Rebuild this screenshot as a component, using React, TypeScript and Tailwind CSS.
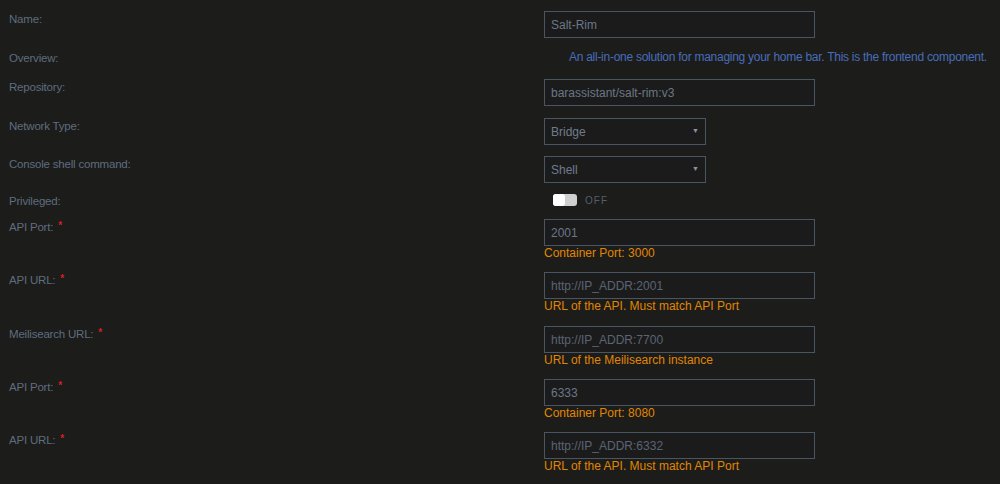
import type { ReactNode } from 'react'

const FONT = { fontFamily: '"Liberation Sans", Arial, sans-serif' }

type Row =
  | { kind: 'input'; label: string; value: string; hint?: string; req?: boolean; placeholder?: boolean; mt: string }
  | { kind: 'select'; label: string; value: string; mt: string }
  | { kind: 'text'; label: string; value: string; mt: string }
  | { kind: 'switch'; label: string; mt: string }

const ROWS: Row[] = [
  { kind: 'input', label: 'Name:', value: 'Salt-Rim', mt: 'mt-[11px]' },
  { kind: 'text', label: 'Overview:', value: 'An all-in-one solution for managing your home bar. This is the frontend component.', mt: 'mt-[12px]' },
  { kind: 'input', label: 'Repository:', value: 'barassistant/salt-rim:v3', mt: 'mt-[15px]' },
  { kind: 'select', label: 'Network Type:', value: 'Bridge', mt: 'mt-[12px]' },
  { kind: 'select', label: 'Console shell command:', value: 'Shell', mt: 'mt-[11px]' },
  { kind: 'switch', label: 'Privileged:', mt: 'mt-[10px]' },
  { kind: 'input', label: 'API Port:', value: '2001', hint: 'Container Port: 3000', req: true, mt: 'mt-[12px]' },
  { kind: 'input', label: 'API URL:', value: 'http://IP_ADDR:2001', hint: 'URL of the API. Must match API Port', req: true, placeholder: true, mt: 'mt-[12px]' },
  { kind: 'input', label: 'Meilisearch URL:', value: 'http://IP_ADDR:7700', hint: 'URL of the Meilisearch instance', req: true, placeholder: true, mt: 'mt-[13px]' },
  { kind: 'input', label: 'API Port:', value: '6333', hint: 'Container Port: 8080', req: true, mt: 'mt-[12px]' },
  { kind: 'input', label: 'API URL:', value: 'http://IP_ADDR:6332', hint: 'URL of the API. Must match API Port', req: true, placeholder: true, mt: 'mt-[12px]' },
]

function Label({ text, req }: { text: string; req?: boolean }) {
  return (
    <div className="relative top-[1px] w-[544px] shrink-0 pl-[9px] text-[11.5px] leading-[14px] tracking-[-0.2px] text-[#5f6d7e]">
      {text}
      {req && <span className="relative -top-[2px] ml-[5px] text-[10px] font-bold text-[#d42020]">*</span>}
    </div>
  )
}

function Box({ children, w }: { children: ReactNode; w: string }) {
  return (
    <div className={`${w} h-[27px] flex items-center justify-between px-[6px] border border-[#4a5563] bg-[#1c1b1b] text-[12px]`}>
      {children}
    </div>
  )
}

export default function App() {
  return (
    <div className="w-[1000px] h-[484px] overflow-hidden bg-[#1c1c1b]" style={FONT}>
      <div className="flex flex-col">
        {ROWS.map((r, i) => {
          if (r.kind === 'text') {
            return (
              <div key={i} className={`flex ${r.mt}`}>
                <Label text={r.label} />
                <div className="pl-[25px] text-[12px] leading-[14px] tracking-[-0.27px] text-[#486dba] whitespace-nowrap">{r.value}</div>
              </div>
            )
          }
          if (r.kind === 'switch') {
            return (
              <div key={i} className={`flex ${r.mt}`}>
                <Label text={r.label} />
                <div className="flex items-center pl-[9px] h-[14px]">
                  <div className="w-[24px] h-[12px] rounded-[3px] bg-[#cfcfcf] flex items-center">
                    <div className="w-[12px] h-[12px] rounded-[3px] bg-white" />
                  </div>
                  <span className="ml-[8px] text-[10px] tracking-[1px] text-[#555e6a]">OFF</span>
                </div>
              </div>
            )
          }
          if (r.kind === 'select') {
            return (
              <div key={i} className={`flex ${r.mt}`}>
                <Label text={r.label} />
                <Box w="w-[162px]">
                  <span className="text-[#6f7c8c]">{r.value}</span>
                  <span className="text-[7px] text-[#8a96a6]">▼</span>
                </Box>
              </div>
            )
          }
          return (
            <div key={i} className={`flex ${r.mt}`}>
              <Label text={r.label} req={r.req} />
              <div className="flex flex-col">
                <Box w="w-[271px]">
                  <span className={r.placeholder ? 'text-[#5a6573]' : 'text-[#6a7787]'}>{r.value}</span>
                </Box>
                {r.hint && <div className="text-[12px] leading-[14px] text-[#e08600]">{r.hint}</div>}
              </div>
            </div>
          )
        })}
      </div>
    </div>
  )
}
